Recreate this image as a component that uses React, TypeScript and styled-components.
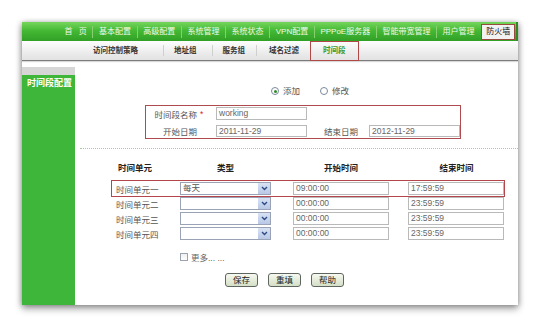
import styled, { createGlobalStyle } from "styled-components";

const GlobalStyle = createGlobalStyle`
  * { box-sizing: border-box; }
  html, body {
    margin: 0;
    background: #ffffff;
    font-family: "Liberation Sans", "Noto Sans CJK SC", sans-serif;
  }
`;

const Page = styled.div`
  width: 541px;
  height: 328px;
  padding: 22px 0 0 22px;
`;

const Panel = styled.div`
  width: 496px;
  height: 283px;
  display: flex;
  flex-direction: column;
  background: #fff;
  box-shadow: 0 4px 7px rgba(0, 0, 0, 0.35), -2px 0 5px rgba(0, 0, 0, 0.15),
    2px 0 5px rgba(0, 0, 0, 0.15);
`;

const TopNav = styled.nav`
  height: 19px;
  display: flex;
  align-items: center;
  padding-left: 37px;
  background: linear-gradient(#74d65c 0%, #45b935 45%, #30a026 100%);
  border-right: 2px solid #2b8a22;
`;

const TopItem = styled.span<{ $first?: boolean }>`
  font-size: 8px;
  line-height: 12px;
  padding: 0 5.6px;
  word-spacing: 4px;
  color: #eef9e8;
  border-left: ${(p) => (p.$first ? "none" : "1px solid #86d06f")};
  white-space: nowrap;
`;

const TopTab = styled.span`
  font-size: 8px;
  line-height: 14px;
  height: 16px;
  padding: 0 4px;
  margin-left: 1px;
  color: #111;
  background: #f2f2f2;
  border: 1px solid #9a4a3c;
  white-space: nowrap;
`;

const SubNav = styled.nav`
  height: 20px;
  display: flex;
  align-items: center;
  padding-left: 60px;
  background: linear-gradient(#fdfdfd, #e2e2e2);
  border-bottom: 1px solid #7c7c7c;
  box-shadow: 0 1px 1px rgba(0, 0, 0, 0.15);
`;

const SubItem = styled.span<{ $pad: string; $last?: boolean }>`
  font-size: 7.5px;
  font-weight: bold;
  line-height: 11px;
  color: #333;
  padding: ${(p) => p.$pad};
  border-right: ${(p) => (p.$last ? "none" : "1px solid #cfcfcf")};
  white-space: nowrap;
`;

const SubTab = styled.span`
  font-size: 7.5px;
  font-weight: bold;
  line-height: 18px;
  height: 20px;
  margin-left: 11px;
  padding: 0 12px;
  color: #3b9a2a;
  border: 1px solid #b04848;
`;

const Body = styled.div`
  flex: 1;
  display: flex;
`;

const Sidebar = styled.aside`
  width: 53px;
  margin-top: 6px;
  display: flex;
  flex-direction: column;
`;

const SideCap = styled.div`
  height: 8px;
  background: #d6d6d6;
`;

const SideBody = styled.div`
  flex: 1;
  background: #3db63a;
  color: #fff;
  font-size: 9px;
  font-weight: bold;
  padding: 3px 0 0 5px;
  line-height: 10px;
  white-space: nowrap;
`;

const Content = styled.main`
  flex: 1;
  display: flex;
  flex-direction: column;
  font-size: 8.5px;
  color: #555;
`;

const RadioRow = styled.div`
  display: flex;
  align-items: center;
  height: 10px;
  margin-top: 25px;
  padding-left: 196px;
  gap: 4px;
`;

const Radio = styled.span<{ $checked?: boolean }>`
  width: 8px;
  height: 8px;
  border-radius: 50%;
  border: 1px solid #7a8a9a;
  background: #fff;
  display: flex;
  align-items: center;
  justify-content: center;
  &::after {
    content: "";
    width: 3px;
    height: 3px;
    border-radius: 50%;
    background: ${(p) => (p.$checked ? "#2f8a2a" : "transparent")};
  }
`;

const RadioLabel = styled.span`
  line-height: 10px;
  margin-right: 16px;
`;

const FormBox = styled.div`
  margin: 9px 0 0 70px;
  width: 316px;
  height: 34px;
  border: 1.5px solid #ad4b4f;
  display: grid;
  grid-template-columns: 51px 19px 91px 62px 91px;
  grid-template-rows: 13px 12px;
  row-gap: 5px;
  align-content: center;
  align-items: center;
`;

const FormLabel = styled.span<{ $right?: boolean }>`
  text-align: ${(p) => (p.$right ? "right" : "left")};
  padding-left: ${(p) => (p.$right ? "0" : "17px")};
  white-space: nowrap;
`;

const Star = styled.span`
  color: #d22;
  padding-left: 3px;
`;

const TextBox = styled.div<{ $h?: number }>`
  height: ${(p) => p.$h ?? 13}px;
  border: 1px solid #b9b9b9;
  background: #fff;
  color: #666;
  font-size: 8.5px;
  line-height: ${(p) => (p.$h ?? 13) - 2}px;
  padding-left: 2px;
  white-space: nowrap;
`;

const Divider = styled.div`
  margin: 9px 0 0 5px;
  border-top: 1px dotted #a9cf95;
`;

const TableHead = styled.div`
  display: grid;
  grid-template-columns: 68px 91px 22px 96px 19px 97px;
  margin: 14px 0 0 37px;
  height: 10px;
  font-weight: bold;
  color: #222;
  line-height: 10px;
`;

const HeadCell = styled.span<{ $left?: boolean }>`
  text-align: ${(p) => (p.$left ? "left" : "center")};
  padding-left: ${(p) => (p.$left ? "6px" : "0")};
`;

const TableRows = styled.div`
  margin: 8px 0 0 37px;
  display: flex;
  flex-direction: column;
`;

const Row = styled.div<{ $hot?: boolean }>`
  display: grid;
  grid-template-columns: 68px 91px 22px 96px 19px 96px;
  align-items: center;
  height: 15px;
  width: 392px;
  outline: ${(p) => (p.$hot ? "1.5px solid #b5454c" : "none")};
`;

const RowLabel = styled.span`
  padding-left: 4px;
  white-space: nowrap;
`;

const Select = styled.div`
  height: 13px;
  display: flex;
  border: 1px solid #9aa3b5;
  background: #fff;
  color: #555;
  line-height: 11px;
`;

const SelectText = styled.span`
  flex: 1;
  padding-left: 2px;
`;

const SelectArrow = styled.span`
  width: 12px;
  background: linear-gradient(#d8e2f4, #b9c8e6);
  display: flex;
  align-items: center;
  justify-content: center;
`;

const MoreRow = styled.div`
  margin: 11px 0 0 105px;
  display: flex;
  align-items: center;
  gap: 3px;
  height: 9px;
  color: #666;
`;

const Check = styled.span`
  width: 8px;
  height: 8px;
  border: 1px solid #9aa3b0;
  background: linear-gradient(#f0f0f0, #fff);
`;

const Buttons = styled.div`
  margin: 12px 0 0 150px;
  display: flex;
  gap: 10px;
`;

const Button = styled.button`
  width: 33px;
  height: 14px;
  padding: 0;
  font-family: inherit;
  font-size: 8.5px;
  color: #222;
  border: 1px solid #5f6660;
  border-radius: 3px;
  background: linear-gradient(#f6f9f0, #d5dfc6);
  line-height: 12px;
`;

const topItems = [
  "首 页",
  "基本配置",
  "高级配置",
  "系统管理",
  "系统状态",
  "VPN配置",
  "PPPoE服务器",
  "智能带宽管理",
  "用户管理",
];

const rows = [
  { name: "时间单元一", type: "每天", start: "09:00:00", end: "17:59:59" },
  { name: "时间单元二", type: "", start: "00:00:00", end: "23:59:59" },
  { name: "时间单元三", type: "", start: "00:00:00", end: "23:59:59" },
  { name: "时间单元四", type: "", start: "00:00:00", end: "23:59:59" },
];

function Chevron() {
  return (
    <svg width="7" height="5" viewBox="0 0 7 5">
      <path d="M1 1 L3.5 3.5 L6 1" fill="none" stroke="#2c4a86" strokeWidth="1.4" />
    </svg>
  );
}

export default function App() {
  return (
    <>
      <GlobalStyle />
      <Page>
        <Panel>
          <TopNav>
            {topItems.map((t, i) => (
              <TopItem key={t} $first={i === 0}>
                {t}
              </TopItem>
            ))}
            <TopTab>防火墙</TopTab>
          </TopNav>
          <SubNav>
            <SubItem $pad="0 25px 0 11px">访问控制策略</SubItem>
            <SubItem $pad="0 15px 0 10px">地址组</SubItem>
            <SubItem $pad="0 11px 0 10px">服务组</SubItem>
            <SubItem $pad="0 0 0 12px" $last>
              域名过滤
            </SubItem>
            <SubTab>时间段</SubTab>
          </SubNav>
          <Body>
            <Sidebar>
              <SideCap />
              <SideBody>时间段配置</SideBody>
            </Sidebar>
            <Content>
              <RadioRow>
                <Radio $checked />
                <RadioLabel>添加</RadioLabel>
                <Radio />
                <RadioLabel>修改</RadioLabel>
              </RadioRow>
              <FormBox>
                <FormLabel $right>时间段名称</FormLabel>
                <Star>*</Star>
                <TextBox>working</TextBox>
                <span />
                <span />
                <FormLabel $right>开始日期</FormLabel>
                <span />
                <TextBox $h={12}>2011-11-29</TextBox>
                <FormLabel>结束日期</FormLabel>
                <TextBox $h={12}>2012-11-29</TextBox>
              </FormBox>
              <Divider />
              <TableHead>
                <HeadCell $left>时间单元</HeadCell>
                <HeadCell>类型</HeadCell>
                <span />
                <HeadCell>开始时间</HeadCell>
                <span />
                <HeadCell>结束时间</HeadCell>
              </TableHead>
              <TableRows>
                {rows.map((r, i) => (
                  <Row key={r.name} $hot={i === 0}>
                    <RowLabel>{r.name}</RowLabel>
                    <Select>
                      <SelectText>{r.type}</SelectText>
                      <SelectArrow>
                        <Chevron />
                      </SelectArrow>
                    </Select>
                    <span />
                    <TextBox>{r.start}</TextBox>
                    <span />
                    <TextBox>{r.end}</TextBox>
                  </Row>
                ))}
              </TableRows>
              <MoreRow>
                <Check />
                <span>更多... ...</span>
              </MoreRow>
              <Buttons>
                <Button>保存</Button>
                <Button>重填</Button>
                <Button>帮助</Button>
              </Buttons>
            </Content>
          </Body>
        </Panel>
      </Page>
    </>
  );
}
